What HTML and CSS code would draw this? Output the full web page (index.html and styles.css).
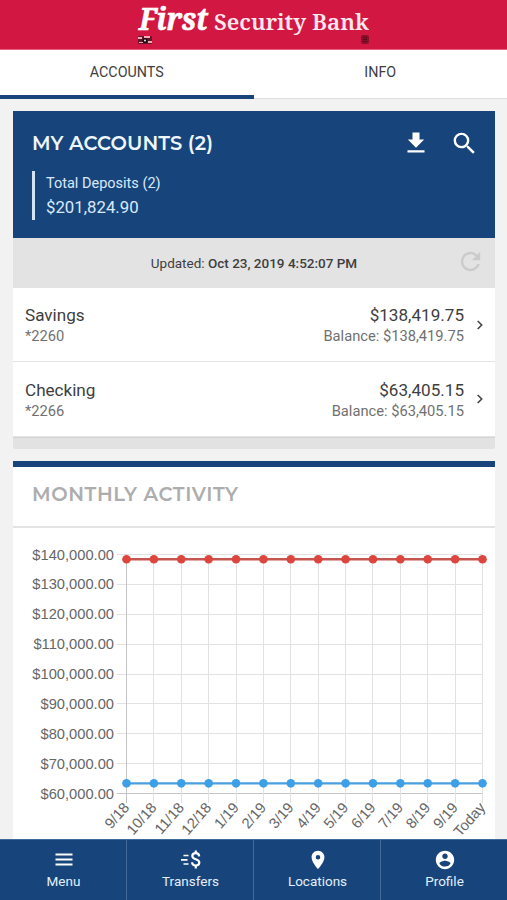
FILE: index.html
```html
<!DOCTYPE html>
<html lang="en">
<head>
<meta charset="utf-8">
<title>First Security Bank</title>
<link rel="stylesheet" href="styles.css">
</head>
<body>
<header class="brand">
  <svg width="507" height="50" viewBox="0 0 507 50">
    <text class="brand-first" x="139" y="29.5" textLength="69" lengthAdjust="spacingAndGlyphs">First</text>
    <text class="brand-rest" x="214" y="29.5" textLength="155" lengthAdjust="spacingAndGlyphs">Security Bank</text>
    <g>
      <rect x="138" y="36" width="14" height="8" rx="1" fill="#641527"/>
      <path d="M138 37h4v2h-4zM144 36h6v2h-6zM139 42h4v1h-4zM148 41h4v2h-4z" fill="#f3a8b5"/>
      <circle cx="145" cy="40.5" r="2.5" fill="#160e13"/>
      <circle cx="145" cy="40.5" r="1" fill="#eee"/>
      <rect x="361" y="35" width="8" height="9" rx="2" fill="#8c1029"/>
      <path d="M363 37h4v1h-4zM363 39h4v1h-4zM363 41h4v1h-4z" fill="#560c1c"/>
    </g>
  </svg>
</header>
<nav class="tabs">
  <a class="tab tab-active">ACCOUNTS</a>
  <a class="tab">INFO</a>
</nav>
<main class="content">
  <section class="accounts">
    <div class="summary">
      <div class="summary-top">
        <svg class="heading" width="190" height="24"><text x="0" y="19" textLength="181" lengthAdjust="spacing">MY ACCOUNTS (2)</text></svg>
        <div class="actions">
          <svg width="28" height="28" viewBox="0 0 24 24"><path fill="#fff" d="M19 9h-4V3H9v6H5l7 7 7-7zM4.700 18.200v2h14.600v-2H4.700z"/></svg>
          <svg width="29" height="29" viewBox="0 0 24 24"><path fill="#fff" d="M15.500 14h-.79l-.28-.27A6.471 6.471 0 0 0 16 9.500 6.500 6.500 0 1 0 9.500 16c1.610 0 3.090-.59 4.230-1.570l.27.28v.79l5 4.990L20.490 19l-4.990-5zm-6 0C7.010 14 5 11.990 5 9.500S7.010 5 9.500 5 14 7.010 14 9.500 11.990 14 9.500 14z"/></svg>
        </div>
      </div>
      <div class="deposits">
        <div class="deposits-label">Total Deposits (2)</div>
        <div class="deposits-value">$201,824.90</div>
      </div>
    </div>
    <div class="updated">
      <span>Updated: <b>Oct 23, 2019 4:52:07 PM</b></span>
      <svg class="refresh" width="29" height="29" viewBox="0 0 24 24"><path fill="#cbcbcb" d="M17.650 6.350A7.958 7.958 0 0 0 12 4a8 8 0 1 0 7.730 10h-2.080A6 6 0 1 1 12 6c1.660 0 3.140.69 4.220 1.780L13 11h7V4l-2.350 2.350z"/></svg>
    </div>
    <div class="account">
      <div class="account-left"><div class="name">Savings</div><div class="sub">*2260</div></div>
      <div class="account-right"><div class="name">$138,419.75</div><div class="sub">Balance: $138,419.75</div></div>
      <svg class="chevron" width="8" height="12" viewBox="0 0 8 12"><path d="M1.700 2l4 4-4 4" fill="none" stroke="#444" stroke-width="1.600"/></svg>
    </div>
    <div class="account">
      <div class="account-left"><div class="name">Checking</div><div class="sub">*2266</div></div>
      <div class="account-right"><div class="name">$63,405.15</div><div class="sub">Balance: $63,405.15</div></div>
      <svg class="chevron" width="8" height="12" viewBox="0 0 8 12"><path d="M1.700 2l4 4-4 4" fill="none" stroke="#444" stroke-width="1.600"/></svg>
    </div>
    <div class="accounts-foot"></div>
  </section>
  <section class="activity">
    <div class="activity-head">
      <svg class="heading heading-grey" width="220" height="24"><text x="0" y="19" textLength="206" lengthAdjust="spacing">MONTHLY ACTIVITY</text></svg>
    </div>
    <svg class="chart" id="chart" width="482" height="311" viewBox="13 528 482 311"></svg>
  </section>
</main>
<footer class="bottom">
  <a class="item">
    <svg width="22" height="22" viewBox="0 0 22 22"><path d="M2.500 5.500h17M2.500 10.500h17M2.500 15.500h17" stroke="#fff" stroke-width="2"/></svg>
    <span>Menu</span>
  </a>
  <a class="item">
    <svg width="22" height="22" viewBox="0 0 22 22"><path d="M3.500 6.500h5M1 10.800h6.500M3.500 15h5" stroke="#fff" stroke-width="1.700"/><path d="M19.200 7.300C19 5.200 17.700 4.200 15.800 4.200c-2 0-3.500 1.100-3.500 2.900 0 4 7 2.400 7 6.500 0 1.900-1.500 3-3.500 3-2.200 0-3.600-1.200-3.700-3.300M15.800 1.500v3M15.800 16.500v3" fill="none" stroke="#fff" stroke-width="2.200"/></svg>
    <span>Transfers</span>
  </a>
  <a class="item">
    <svg width="22" height="22" viewBox="0 0 24 24"><path fill="#fff" d="M12 2C8.130 2 5 5.130 5 9c0 5.250 7 13 7 13s7-7.750 7-13c0-3.870-3.130-7-7-7zm0 9.500a2.500 2.500 0 0 1 0-5 2.500 2.500 0 0 1 0 5z"/></svg>
    <span>Locations</span>
  </a>
  <a class="item">
    <svg width="22" height="22" viewBox="0 0 24 24"><path fill="#fff" d="M12 2C6.480 2 2 6.480 2 12s4.480 10 10 10 10-4.480 10-10S17.520 2 12 2zm0 3c1.660 0 3 1.340 3 3s-1.340 3-3 3-3-1.340-3-3 1.340-3 3-3zm0 14.200a7.200 7.200 0 0 1-6-3.220c.03-1.990 4-3.080 6-3.080 1.990 0 5.970 1.090 6 3.080a7.200 7.200 0 0 1-6 3.220z"/></svg>
    <span>Profile</span>
  </a>
</footer>
<script src="chart.js"></script>
</body>
</html>
```
FILE: styles.css
```css
* { box-sizing: border-box; }
body {
  margin: 0;
  height: 900px;
  overflow: hidden;
  display: flex;
  flex-direction: column;
  background: #f2f2f2;
  font-family: Roboto, sans-serif;
  color: #3e3e3e;
}
svg { display: block; flex: none; overflow: visible; }

.brand { height: 50px; background: #d21842; border-bottom: 1px solid #e4607c; }
.brand text { font-family: "Noto Serif", "Liberation Serif", serif; fill: #fff; font-weight: bold; }
.brand-first { font-size: 31px; font-style: italic; stroke: #fff; stroke-width: .7px; }
.brand .brand-rest { font-size: 22.500px; font-weight: 600; fill: #fde9ee; }

.tabs { display: flex; height: 49px; background: #fff; border-bottom: 1px solid #dedede; }
.tab { flex: 1; text-align: center; font-size: 14.300px; line-height: 44px; }
.tab-active { height: 49px; border-bottom: 4px solid #17457b; }

.content { flex: 1; min-height: 0; padding: 12px 12px 0 13px; }
.summary { height: 127px; background: #17457b; padding: 18px 16px 0 19px; color: #d9e9fb; }
.summary-top { display: flex; justify-content: space-between; height: 42px; }
.heading { margin-top: 2px; }
.heading text { font-family: Montserrat, Lato, sans-serif; font-size: 19.500px; font-weight: 600; fill: #eef6ff; }
.heading-grey text { fill: #adadad; }
.actions { display: flex; gap: 20px; }
.deposits { height: 49px; border-left: 3px solid #d5e4f3; padding-left: 11px; }
.deposits-label { font-size: 14.500px; line-height: 25px; }
.deposits-value { font-size: 16.800px; line-height: 22px; }

.updated { position: relative; height: 50px; background: #e3e3e3; display: flex; align-items: center; justify-content: center; font-size: 13.500px; }
.updated b { font-weight: 500; }
.refresh { position: absolute; right: 10px; top: 9px; }

.account { height: 74px; background: #fff; border-bottom: 1px solid #e4e4e4; display: flex; padding: 16px 11px 0 12px; }
.account + .account { height: 75px; }
.account-right { margin-left: auto; text-align: right; }
.name { font-size: 17.100px; line-height: 22px; }
.account + .account .name { padding-top: 1px; }
.sub { font-size: 14.700px; line-height: 20px; color: #707070; }
.chevron { margin: 15px 0 0 12px; }
.accounts-foot { height: 12px; background: #e2e2e2; border-top: 1px solid #d4d4d4; border-radius: 0 0 2px 2px; }

.activity { margin-top: 12px; background: #fff; border-top: 6px solid #17457b; }
.activity-head { height: 61px; padding: 13px 19px 0; border-bottom: 2px solid #e4e4e4; }
.chart text { font-family: "Liberation Sans", Arial, sans-serif; font-size: 14.700px; fill: #666; }

.bottom { position: relative; display: flex; height: 61px; flex: none; background: #17457b; border-top: 1px solid #3d6b9b; }
.item { flex: 1; display: flex; flex-direction: column; align-items: center; padding: 9px 0 0 1px; color: #e3effb; font-size: 13.500px; line-height: 20px; }
.item:not(:last-child) { border-right: 1px solid #426b98; }
```
FILE: chart.js
```js
const months = ["9/18", "10/18", "11/18", "12/18", "1/19", "2/19", "3/19", "4/19", "5/19", "6/19", "7/19", "8/19", "9/19", "Today"];
const left = 126.5, right = 482.5, top0 = 554.5, bottom0 = 793.5;
const x = i => left + (right - left) * i / (months.length - 1);
const y = v => bottom0 - (bottom0 - top0) * (v - 60000) / 80000;
let out = "";
for (let v = 60000; v <= 140000; v += 10000) {
  const yy = Math.floor(y(v)) + 0.5;
  out += `<path d="M117 ${yy}H${right}" stroke="${v === 60000 ? "#c4c4c4" : "#e2e2e2"}"/>`;
  out += `<text x="114" y="${y(v) + 5}" text-anchor="end">$${v.toLocaleString("en-US")}.00</text>`;
}
months.forEach((m, i) => {
  const xx = Math.floor(x(i)) + 0.5;
  out += `<path d="M${xx} ${top0}V803" stroke="${i ? "#e2e2e2" : "#c4c4c4"}"/>`;
  out += `<text transform="translate(${x(i) + 3.5} 808) rotate(-49)" text-anchor="end">${m}</text>`;
});
[[138419.75, "#dc463f", "#c6544f"], [63405.15, "#3d9fe8", "#4a9fe0"]].forEach(([v, dot, line]) => {
  out += `<path d="M${left} ${y(v)}H${right}" stroke="${line}" stroke-width="2.400"/>`;
  months.forEach((m, i) => { out += `<circle cx="${x(i)}" cy="${y(v)}" r="4.300" fill="${dot}"/>`; });
});
document.getElementById("chart").innerHTML = out;
```
